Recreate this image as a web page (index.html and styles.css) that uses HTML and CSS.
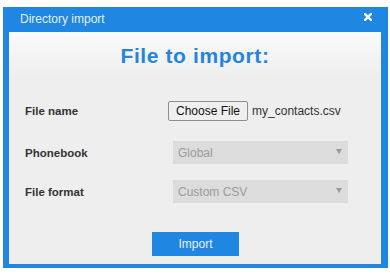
FILE: index.html
```html
<!DOCTYPE html>
<html lang="en">
<head>
  <meta charset="UTF-8" />
  <title>Directory import</title>
  <link rel="stylesheet" href="styles.css">
</head>
<body>

<div class="dialog">
  <div class="dialog-header">
    <span class="dialog-title">Directory import</span>
    <svg class="close-icon" width="8" height="8" viewBox="0 0 8 8">
      <path d="M1 1 L7 7 M7 1 L1 7" stroke="#fff" stroke-width="2.4" stroke-linecap="square" />
    </svg>
  </div>

  <div class="dialog-body">
    <h1 class="heading">File to import:</h1>

    <div class="form-grid">
      <div class="label">File name</div>
      <div class="control">
        <button class="file-button">Choose File</button>
        <span class="file-name">my_contacts.csv</span>
      </div>

      <div class="label">Phonebook</div>
      <div class="control">
        <div class="fake-select">Global<span class="arrow"></span></div>
      </div>

      <div class="label">File format</div>
      <div class="control">
        <div class="fake-select">Custom CSV<span class="arrow"></span></div>
      </div>
    </div>

    <div class="actions">
      <button class="import-button">Import</button>
    </div>
  </div>
</div>

</body>
</html>
```

FILE: styles.css
```css
body {
  margin: 0;
  padding: 0;
  background: white;
  font-family: "Liberation Sans", Arial, sans-serif;
}

.dialog {
  width: 385px;
  margin: 7px 0 0 3px;
  background: #1f86e2;
  padding: 0 7px 4px 6px;
  box-sizing: border-box;
}

.dialog-header {
  height: 25px;
  display: flex;
  align-items: center;
  justify-content: space-between;
  padding: 0 9px 0 11px;
}

.dialog-title {
  color: #e3effb;
  font-size: 12px;
  line-height: 25px;
}

.close-icon {
  margin-top: -5px;
}

.dialog-body {
  height: 232px;
  background: linear-gradient(#fafafa, #eeeeee 45px, #eeeeee);
  box-sizing: border-box;
  padding-top: 12px;
}

.heading {
  margin: 0;
  text-align: center;
  color: #2585dc;
  font-size: 21px;
  line-height: 24px;
  font-weight: bold;
  letter-spacing: 0.6px;
}

.form-grid {
  display: grid;
  grid-template-columns: 143px 1fr;
  grid-template-rows: 42px 39px 23px;
  margin-top: 31px;
  padding-left: 16px;
}

.label {
  font-size: 11.5px;
  font-weight: bold;
  color: #333;
  height: 23px;
  display: flex;
  align-items: center;
}

.control {
  height: 23px;
  display: flex;
  align-items: center;
}

.file-button {
  height: 20px;
  padding: 0 7px;
  font-family: "Liberation Sans", Arial, sans-serif;
  font-size: 12px;
  color: #111;
  background: #efefef;
  border: 1px solid #8f8f8f;
  border-radius: 2px;
}

.file-name {
  margin-left: 4px;
  font-size: 12px;
  color: #333;
}

.fake-select {
  margin-left: 5px;
  width: 175px;
  height: 23px;
  background: #dcdcdc;
  color: #9a9a9a;
  font-size: 12px;
  display: flex;
  align-items: center;
  justify-content: space-between;
  padding: 0 6px 0 5px;
  box-sizing: border-box;
}

.arrow {
  width: 0;
  height: 0;
  border-left: 3px solid transparent;
  border-right: 3px solid transparent;
  border-top: 5px solid #999;
  margin-top: -2px;
}

.actions {
  display: flex;
  justify-content: center;
  margin-top: 29px;
}

.import-button {
  width: 87px;
  height: 24px;
  background: #1f86e2;
  border: none;
  color: #e8f2fc;
  font-family: "Liberation Sans", Arial, sans-serif;
  font-size: 12px;
  margin-left: 1px;
}
```
